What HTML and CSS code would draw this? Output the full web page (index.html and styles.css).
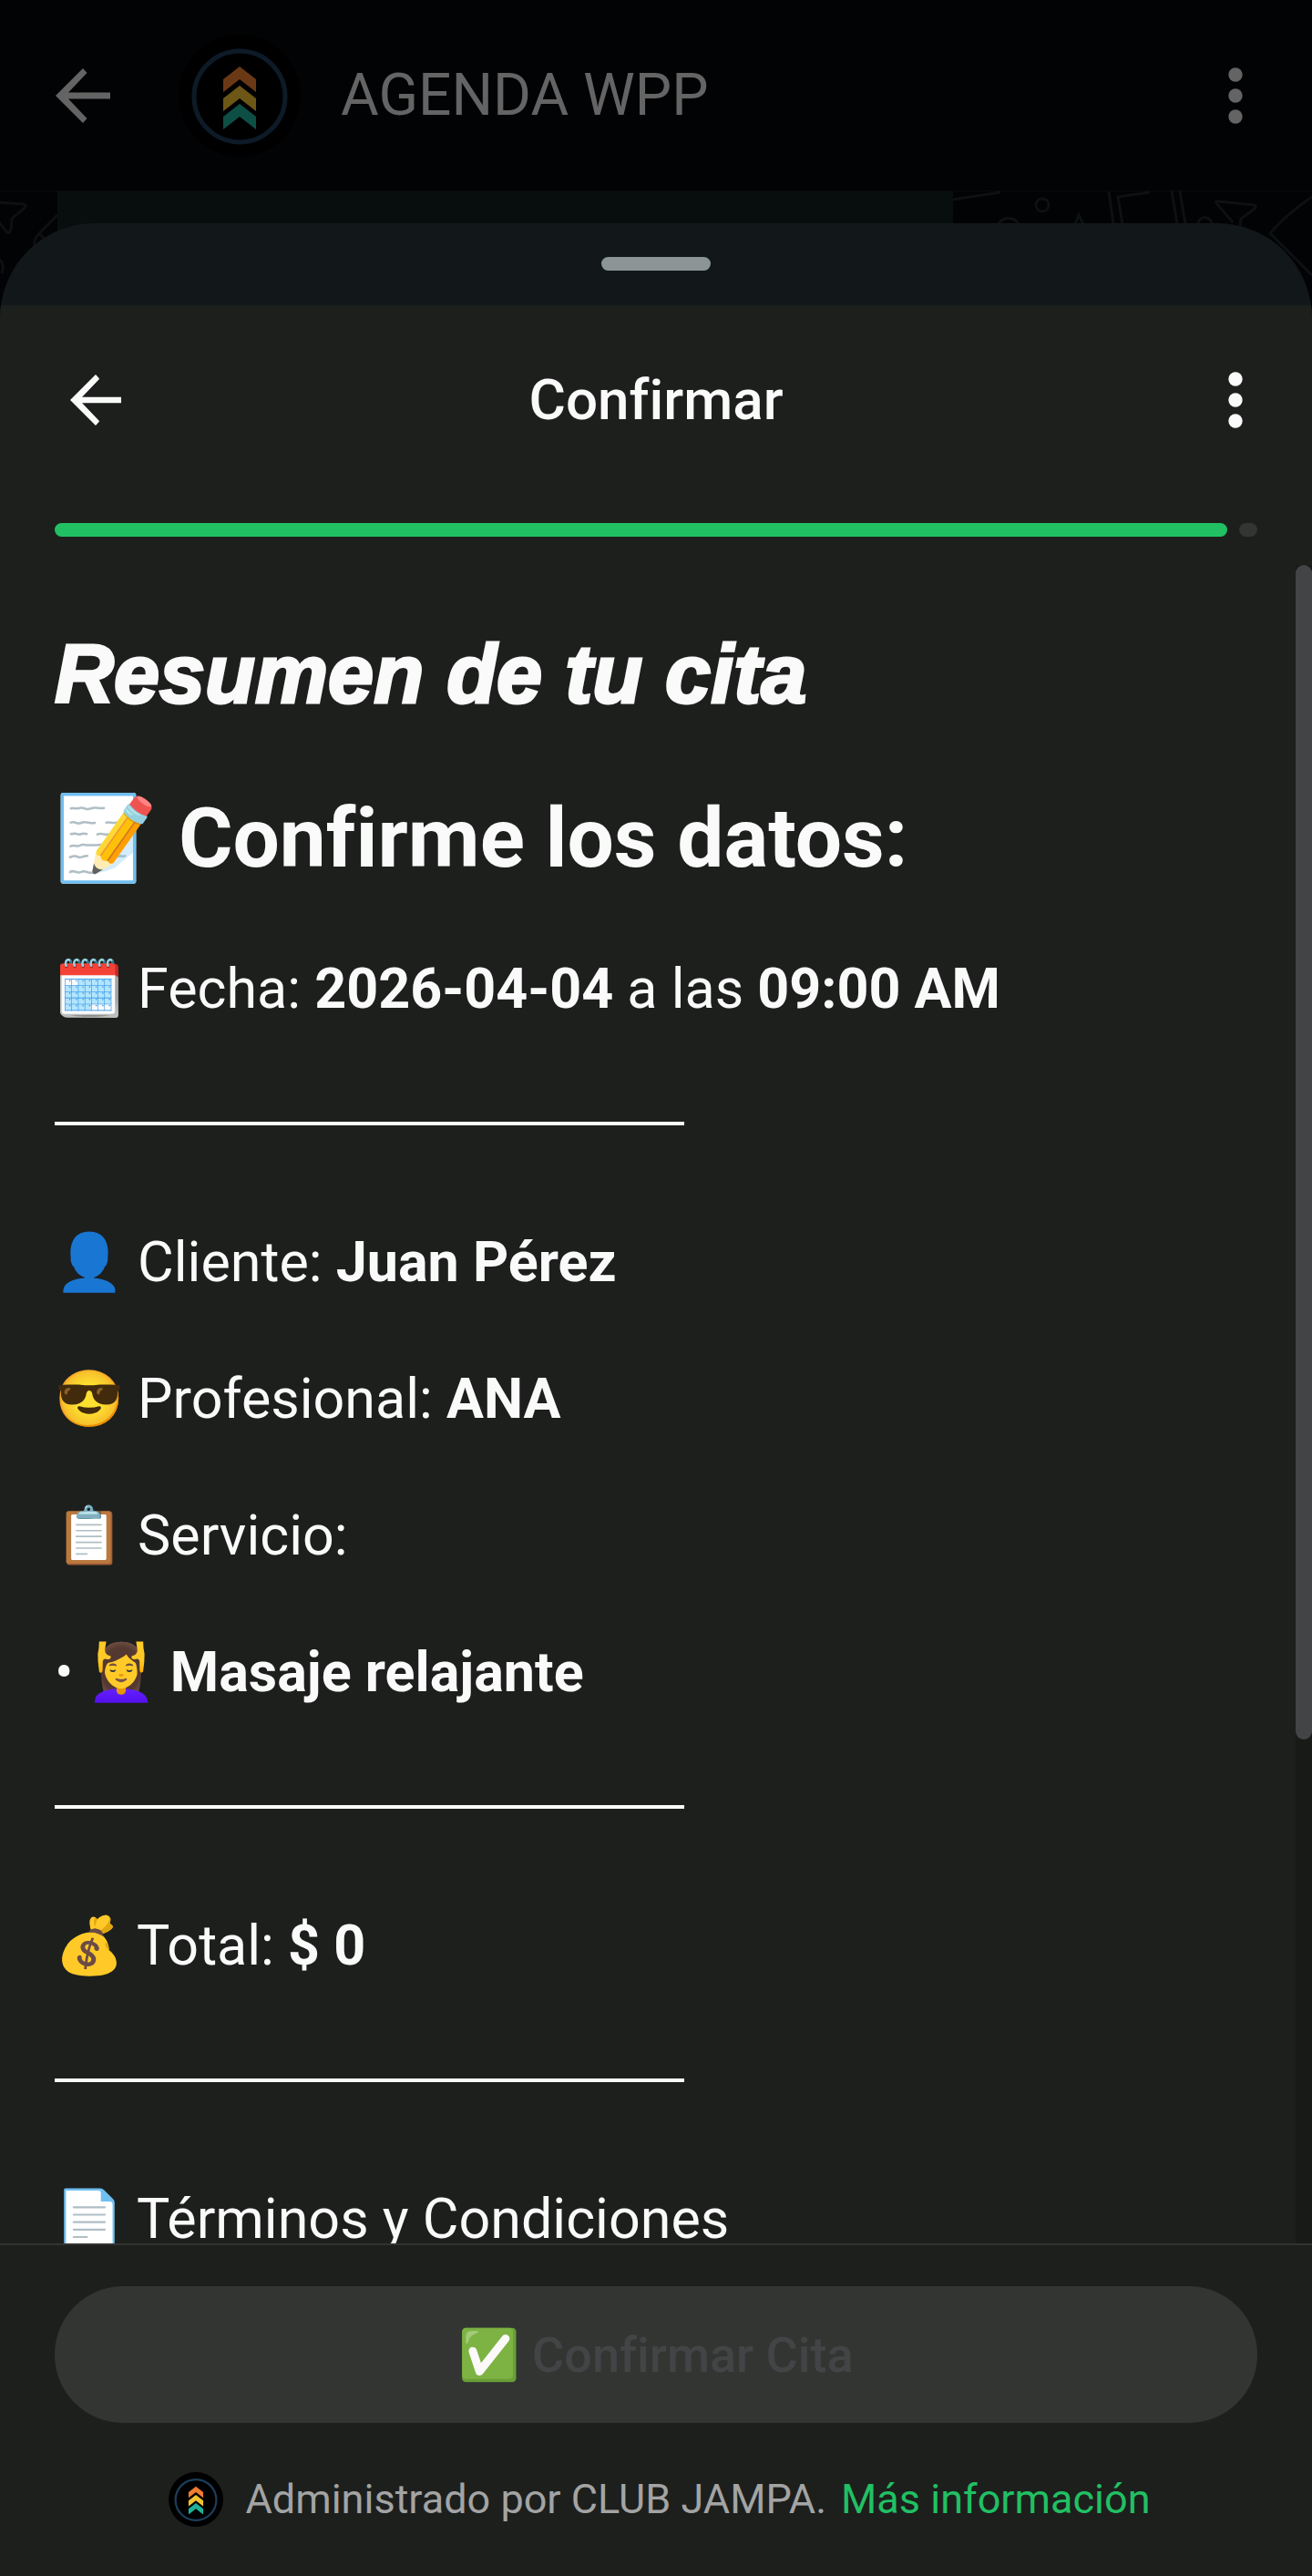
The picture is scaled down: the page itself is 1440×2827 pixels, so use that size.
FILE: index.html
```html
<!DOCTYPE html>
<html lang="es">
<head>
<meta charset="utf-8">
<meta name="viewport" content="width=device-width, initial-scale=1">
<title>Confirmar</title>
<link rel="stylesheet" href="styles.css">
</head>
<body>
<svg class="defs" aria-hidden="true">
  <symbol id="logo" viewBox="0 0 134 134">
    <circle cx="67" cy="67" r="67" fill="#000"/>
    <circle cx="67" cy="68" r="50" fill="none" stroke="#1d3d59" stroke-width="5"/>
    <path d="M49 49 67 35 85 49V63L67 49 49 63Z" fill="#ed7d31"/>
    <path d="M49 70 67 56 85 70V84L67 70 49 84Z" fill="#f2c230"/>
    <path d="M49 90 67 76 85 90V104L67 90 49 104Z" fill="#1fb09a"/>
  </symbol>
  <symbol id="arrow" viewBox="0 0 60 60">
    <path d="M60 26.500H14L34.500 5 30 0 0 30 30 60 34.500 55 14 33.500H60Z" fill="currentColor"/>
  </symbol>
  <symbol id="dots" viewBox="0 0 16 62">
    <circle cx="8" cy="8" r="7.700" fill="currentColor"/>
    <circle cx="8" cy="31" r="7.700" fill="currentColor"/>
    <circle cx="8" cy="54" r="7.700" fill="currentColor"/>
  </symbol>
</svg>

<div class="app">
  <header class="chat-bar">
    <button class="icon-btn" aria-label="Volver"><svg class="chat-arrow"><use href="#arrow"/></svg></button>
    <svg class="avatar"><use href="#logo"/></svg>
    <span class="chat-name">AGENDA WPP</span>
    <button class="icon-btn" aria-label="Más opciones"><svg class="dots"><use href="#dots"/></svg></button>
  </header>

  <div class="chat">
    <svg class="doodle doodle-left" viewBox="0 0 63 126" aria-hidden="true">
      <path d="M-4 12 26 14Q30 16 26 19L13 30 12 42Q10 48 7 44L-4 30M63 26 44 45Q36 54 38 60M43 46 52 56M-2 74Q6 78 2 90"/>
    </svg>
    <svg class="doodle doodle-right" viewBox="0 0 394 126" aria-hidden="true">
      <path d="M0 9 52 1M50 36A12 11 0 0 1 72 36M134 36 138 26 143 36M171 0 176 36M186 36 181 6 216 1M240 0 246 36M249 0 255 36M269 36A7 7 0 0 1 284 36M307 34 289 13Q288 10 292 11L330 15Q334 16 331 19L316 30 315 38M394 6Q365 26 348 46L394 92"/>
      <circle cx="98" cy="15" r="7"/>
    </svg>
    <div class="bubble"></div>

    <section class="sheet">
      <div class="grip"><span class="grip-bar"></span></div>
      <div class="panel">
        <div class="title-bar">
          <button class="icon-btn" aria-label="Atrás"><svg class="sheet-arrow"><use href="#arrow"/></svg></button>
          <h2 class="title">Confirmar</h2>
          <button class="icon-btn" aria-label="Opciones"><svg class="dots"><use href="#dots"/></svg></button>
        </div>
        <div class="progress"><span class="done"></span><span class="left"></span></div>
        <div class="scroller">
          <main class="content">
            <h1 class="heading">Resumen de tu cita</h1>
            <h2 class="subheading">📝 Confirme los datos:</h2>
            <p>🗓️ Fecha: <b>2026-04-04</b> a las <b>09:00 AM</b></p>
            <hr>
            <p>👤 Cliente: <b>Juan Pérez</b></p>
            <p>😎 Profesional: <b>ANA</b></p>
            <p>📋 Servicio:</p>
            <p>• 💆‍♀️ <b>Masaje relajante</b></p>
            <hr>
            <p>💰 Total: <b>$ 0</b></p>
            <hr>
            <p>📄 Términos y Condiciones</p>
          </main>
          <div class="track"><div class="thumb"></div></div>
        </div>
        <footer class="footer">
          <button class="confirm" disabled><span class="check">✅</span> Confirmar Cita</button>
          <div class="managed">
            <svg class="mini-logo"><use href="#logo"/></svg>
            <span>Administrado por CLUB JAMPA.</span>
            <a href="#info">Más información</a>
          </div>
        </footer>
      </div>
    </section>
  </div>
</div>
</body>
</html>
```
FILE: styles.css
```css
* { box-sizing: border-box; }

body {
  margin: 0;
  background: #020305;
  color: #fafafa;
  font-family: Roboto, "Noto Color Emoji", sans-serif;
  font-variant-ligatures: no-common-ligatures;
}

.defs { position: absolute; width: 0; height: 0; }
svg { display: block; flex: none; }

.app {
  display: flex;
  flex-direction: column;
  height: 100vh;
}

.icon-btn {
  padding: 0;
  border: 0;
  background: none;
  color: inherit;
}

.dots { width: 16px; height: 62px; }

/* Dimmed chat behind the sheet */
.chat-bar {
  display: flex;
  align-items: center;
  height: 210px;
  padding: 4px 76px 4px 61px;
  border-bottom: 1px solid #090b0d;
  color: #646464;
}
.chat-arrow { width: 60px; height: 60px; }
.avatar {
  width: 134px;
  height: 134px;
  margin: 0 44px 0 75px;
  filter: brightness(0.45);
}
.chat-name { flex: 1; font-size: 64px; }

.chat {
  position: relative;
  display: flex;
  flex: 1;
  flex-direction: column;
  min-height: 0;
}
.doodle {
  position: absolute;
  top: 0;
  height: 126px;
  fill: none;
  stroke: #0e1012;
  stroke-width: 3;
}
.doodle-left { left: 0; width: 63px; }
.doodle-right { right: 0; width: 394px; }
.bubble {
  height: 136px;
  margin: 0 394px -101px 63px;
  background: #080e0e;
}

/* Sheet */
.sheet {
  position: relative;
  display: flex;
  flex: 1;
  flex-direction: column;
  min-height: 0;
  overflow: hidden;
  border-radius: 104px 104px 0 0;
  background: #12181a;
}
.grip {
  display: flex;
  justify-content: center;
  height: 90px;
  padding-top: 37px;
}
.grip-bar {
  width: 120px;
  height: 15px;
  border-radius: 8px;
  background: #8b9596;
}
.panel {
  display: flex;
  flex: 1;
  flex-direction: column;
  min-height: 0;
  background: #1d1f1d;
}

.title-bar {
  display: grid;
  grid-template-columns: 1fr auto 1fr;
  align-items: center;
  height: 209px;
  padding: 0 76px 2px;
}
.title-bar .icon-btn:last-child { justify-self: end; }
.title-bar .icon-btn:first-child { justify-self: start; }
.sheet-arrow { width: 58px; height: 56px; }
.title {
  margin: 0;
  font-size: 62px;
  font-weight: 500;
}

.progress {
  display: flex;
  gap: 13px;
  padding: 30px 60px 31px;
}
.progress span { height: 15px; border-radius: 8px; }
.done { flex: 1; background: #21c063; }
.left { width: 20px; background: #333532; }

.scroller {
  display: flex;
  flex: 1;
  min-height: 0;
}
.content {
  flex: 1;
  padding: 60px;
  overflow: hidden;
  font-size: 61px;
  line-height: 90px;
}
.content p { margin: 0 0 60px; white-space: nowrap; }
.content b { font-weight: 700; }
.content hr {
  width: 691px;
  height: 4px;
  margin: 101px 0 105px;
  border: 0;
  background: #fafafa;
}
.heading, .subheading {
  margin: 0 0 60px;
  line-height: 120px;
}
.heading {
  font-family: "Liberation Sans", sans-serif;
  font-size: 90px;
  font-style: italic;
  -webkit-text-stroke: 3px #fafafa;
}
.subheading { font-size: 91px; }
.track { width: 18px; background: #181a18; }
.thumb {
  height: 70%;
  border-radius: 9px;
  background: #434446;
}

.footer {
  padding: 45px 60px 54px;
  border-top: 2px solid #333432;
}
.confirm {
  display: block;
  width: 100%;
  height: 150px;
  border: 0;
  border-radius: 75px;
  background: #333532;
  color: #424446;
  font: 500 54px Roboto, "Noto Color Emoji", sans-serif;
  font-variant-ligatures: no-common-ligatures;
}
.check { color: #000; }
.managed {
  display: flex;
  align-items: center;
  justify-content: center;
  margin-top: 54px;
  padding-left: 8px;
  color: #a3a4a3;
  font-size: 45px;
  line-height: 60px;
}
.mini-logo { width: 60px; height: 60px; margin-right: 24px; }
.managed a {
  margin-left: 16px;
  color: #21c063;
  text-decoration: none;
}
```
